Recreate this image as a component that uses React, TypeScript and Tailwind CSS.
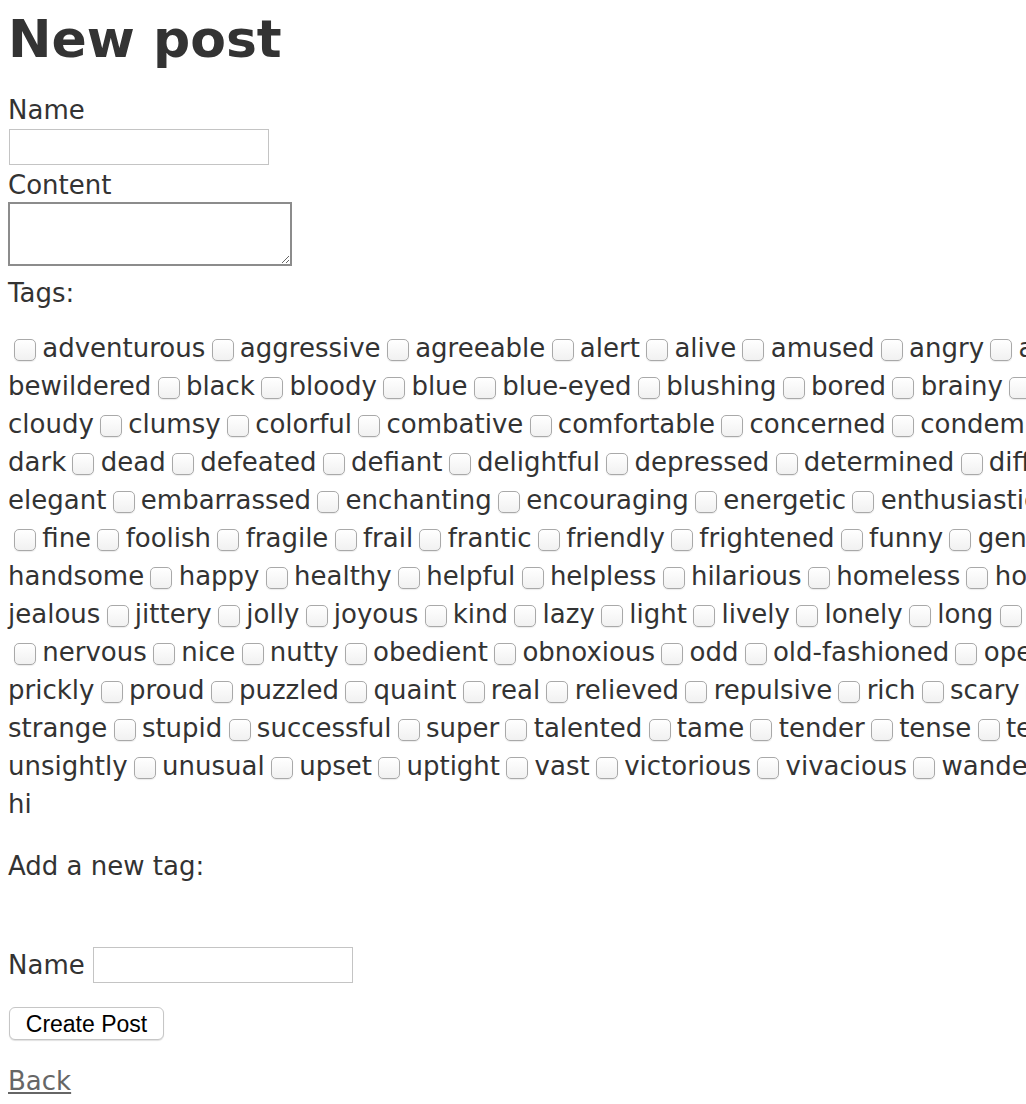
import React from "react";

type TagRow = { lead: boolean; words: string[] };

// rows as the browser wrapped them; each row runs past the right edge of the window
const tagRows: TagRow[] = [
  { lead: true, words: ["adventurous", "aggressive", "agreeable", "alert", "alive", "amused", "angry", "annoyed", "annoying", "anxious"] },
  { lead: false, words: ["bewildered", "black", "bloody", "blue", "blue-eyed", "blushing", "bored", "brainy", "brave", "breakable"] },
  { lead: false, words: ["cloudy", "clumsy", "colorful", "combative", "comfortable", "concerned", "condemned", "confused"] },
  { lead: false, words: ["dark", "dead", "defeated", "defiant", "delightful", "depressed", "determined", "different", "difficult"] },
  { lead: false, words: ["elegant", "embarrassed", "enchanting", "encouraging", "energetic", "enthusiastic", "envious", "evil"] },
  { lead: true, words: ["fine", "foolish", "fragile", "frail", "frantic", "friendly", "frightened", "funny", "gentle", "gifted"] },
  { lead: false, words: ["handsome", "happy", "healthy", "helpful", "helpless", "hilarious", "homeless", "homely", "horrible"] },
  { lead: false, words: ["jealous", "jittery", "jolly", "joyous", "kind", "lazy", "light", "lively", "lonely", "long", "lovely"] },
  { lead: true, words: ["nervous", "nice", "nutty", "obedient", "obnoxious", "odd", "old-fashioned", "open", "outrageous"] },
  { lead: false, words: ["prickly", "proud", "puzzled", "quaint", "real", "relieved", "repulsive", "rich", "scary", "selfish"] },
  { lead: false, words: ["strange", "stupid", "successful", "super", "talented", "tame", "tender", "tense", "terrible", "testy"] },
  { lead: false, words: ["unsightly", "unusual", "upset", "uptight", "vast", "victorious", "vivacious", "wandering", "weary"] },
];

function TagBox({ first }: { first?: boolean }) {
  return (
    <input
      type="checkbox"
      className={
        "appearance-none inline-block w-[22px] h-[22px] rounded-[5px] border border-[#a9a9a9] bg-gradient-to-b from-white to-[#f1f1f1] align-[-4px] shadow-[0_1px_1px_rgba(0,0,0,0.08)] " +
        (first ? "ml-[6px]" : "")
      }
    />
  );
}

function TagLine({ row }: { row: TagRow }) {
  return (
    <div className="whitespace-nowrap">
      {row.words.map((w, i) => (
        <React.Fragment key={w}>
          {i > 0 && " "}
          {(i > 0 || row.lead) && <TagBox first={i === 0} />}
          {(i > 0 || row.lead) && " "}
          <label>{w}</label>
        </React.Fragment>
      ))}
    </div>
  );
}

export default function App() {
  return (
    <div className="w-full overflow-hidden bg-white text-[#333] font-['DejaVu_Sans',Verdana,sans-serif] text-[26px] leading-[36px] pt-[9px] px-[8px] pb-[14px]">
      <h1 className="text-[52px] leading-[60px] font-bold">New post</h1>

      <div className="mt-[23px]">Name</div>
      <input type="text" className="block ml-px mt-px w-[260px] h-[36px] border border-[#c4c4c4] bg-white" />

      <div className="mt-[2px]">Content</div>
      <textarea className="block -mt-px w-[284px] h-[64px] border-2 border-[#8c8c8c] bg-white" />

      <div className="mt-[9px]">Tags:</div>

      <div className="mt-[18px] leading-[38px] [word-spacing:-2px]">
        {tagRows.map((r) => (
          <TagLine key={r.words[0]} row={r} />
        ))}
        <div>hi</div>
      </div>

      <div className="mt-[25px]">Add a new tag:</div>

      <div className="mt-[63px] flex items-center gap-[8px]">
        <label>Name</label>
        <input type="text" className="w-[260px] h-[36px] border border-[#c4c4c4] bg-white" />
      </div>

      <button className="block mt-[24px] ml-px w-[155px] h-[33px] rounded-[6px] border border-[#c6c6c6] bg-white shadow-[0_1px_1px_rgba(0,0,0,0.12)] font-['Liberation_Sans',Arial,sans-serif] text-[23px] leading-[33px] text-black">
        Create Post
      </button>

      <div className="mt-[23px]">
        <a href="#" className="text-[#666] underline">
          Back
        </a>
      </div>
    </div>
  );
}
